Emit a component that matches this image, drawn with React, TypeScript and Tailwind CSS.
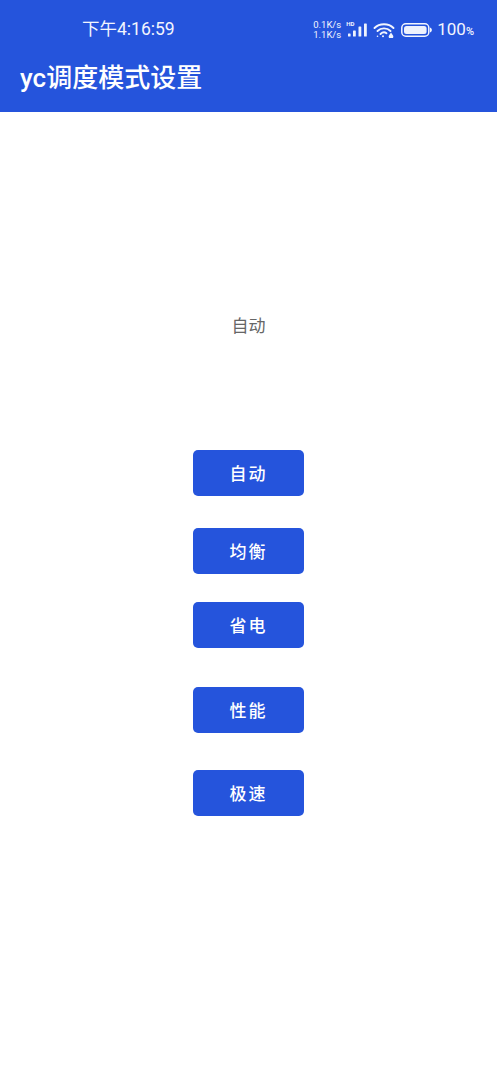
const Signal = () => (
  <svg width="20" height="14" viewBox="0 0 20 14" fill="#eef2fd">
    <rect x="0" y="10.5" width="2.6" height="3" rx="0.6" />
    <rect x="5" y="7.5" width="2.8" height="6" rx="0.6" />
    <rect x="10.5" y="3.5" width="2.8" height="10" rx="0.6" />
    <rect x="16" y="0.5" width="2.8" height="13" rx="0.6" />
  </svg>
);

const Wifi = () => (
  <svg width="22" height="16" viewBox="0 0 22 16" fill="none" stroke="#f2f5fe" strokeWidth="1.9" strokeLinecap="round">
    <path d="M1.5 6 C6.5 1 15.5 1 20.5 6" />
    <path d="M4.5 9 C8 5.5 14 5.5 17.5 9" />
    <path d="M7.5 12 C9.5 10 12 10 13.5 11.2" />
    <circle cx="10" cy="14.2" r="1" fill="#f2f5fe" stroke="none" />
    <circle cx="4.5" cy="14.2" r="0.8" fill="#f2f5fe" stroke="none" />
    <path d="M18 10.5 L20 13.5 A2.3 2.3 0 1 1 16 13.5 Z" fill="#f2f5fe" stroke="none" />
  </svg>
);

const Battery = () => (
  <svg width="32" height="14" viewBox="0 0 32 14" fill="none">
    <rect x="0.8" y="0.8" width="27" height="12.4" rx="4" stroke="#f2f5fe" strokeWidth="1.5" />
    <rect x="3" y="3" width="22.6" height="8" rx="2.5" fill="#eef2fd" />
    <path d="M29 4.5 C31.5 5.5 31.5 8.5 29 9.5 Z" fill="#f2f5fe" />
  </svg>
);

const StatusBar = () => (
  <div className="h-[57px] flex items-center pl-[82px] pr-[23px] pt-[2px] text-[#f2f5fe]">
    <span className="text-[17.5px] leading-none">下午4:16:59</span>
    <div className="ml-auto flex items-center">
      <div className="flex flex-col text-[9.5px] leading-[10px] w-[35px]">
        <span>0.1K/s</span>
        <span>1.1K/s</span>
      </div>
      <div className="relative">
        <Signal />
        <span className="absolute left-[-2px] top-[-2px] text-[6px] leading-none font-bold">HD</span>
      </div>
      <div className="ml-[5px]">
        <Wifi />
      </div>
      <div className="ml-[6px]">
        <Battery />
      </div>
      <span className="ml-[4px] text-[17px] leading-none">
        100<span className="text-[11px] font-medium">%</span>
      </span>
    </div>
  </div>
);

const modes = [
  { label: "自动", mt: "mt-0" },
  { label: "均衡", mt: "mt-[32px]" },
  { label: "省电", mt: "mt-[28px]" },
  { label: "性能", mt: "mt-[39px]" },
  { label: "极速", mt: "mt-[37px]" },
];

export default function App() {
  return (
    <div
      className="w-full min-h-[1080px] bg-white flex flex-col"
      style={{ fontFamily: 'Roboto, "Noto Sans CJK SC", sans-serif' }}
    >
      <div className="h-[112px] bg-[#2554dc]">
        <StatusBar />
        <h1 className="pl-[20px] pt-[6px] text-[26px] leading-[30px] font-medium text-white">yc调度模式设置</h1>
      </div>
      <p className="mt-[204px] text-center text-[17px] leading-[20px] text-[#666666]">自动</p>
      <div className="mt-[114px] flex flex-col items-center">
        {modes.map((m) => (
          <button
            key={m.label}
            className={`w-[111px] h-[46px] pt-[3px] rounded-[5px] bg-[#2554dc] text-white text-[17px] leading-none font-medium tracking-[2px] ${m.mt}`}
          >
            {m.label}
          </button>
        ))}
      </div>
    </div>
  );
}
